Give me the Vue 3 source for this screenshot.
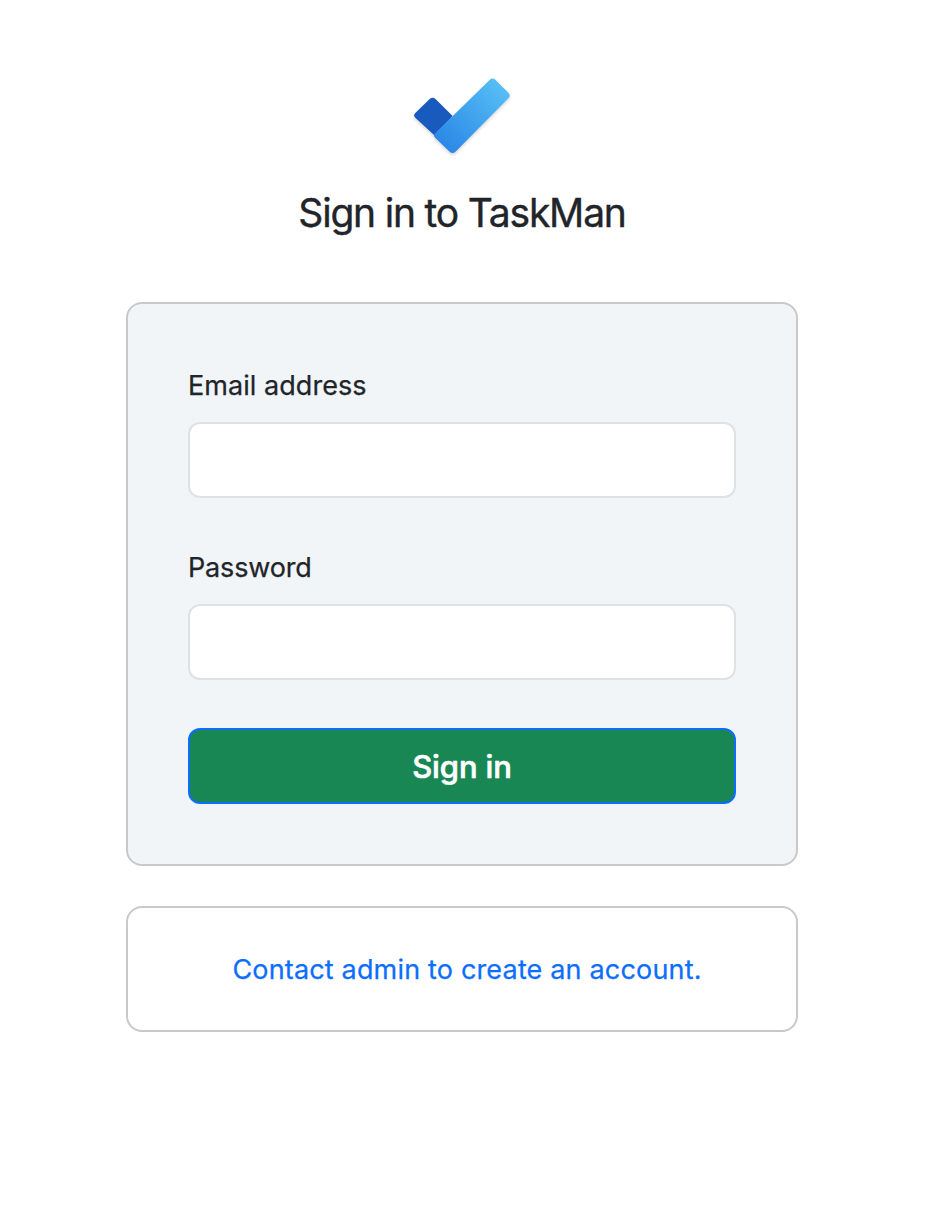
<script setup>
import { ref } from 'vue'

const email = ref('')
const password = ref('')
</script>

<template>
  <main class="page">
    <svg class="logo" viewBox="-0.6 -0.5 112 92" aria-hidden="true">
      <defs>
        <linearGradient id="check" gradientUnits="userSpaceOnUse" x1="36" y1="76" x2="95" y2="18">
          <stop offset="0" stop-color="#2b87e6" />
          <stop offset="1" stop-color="#55bdf4" />
        </linearGradient>
      </defs>
      <path fill="#185abd" d="M23.1 28.6Q26 26 28.9 28.6L46 45.5L28 65L8.7 47.2Q6.2 44.7 8.7 42.4Z" />
      <path fill="url(#check)" d="M83 9.4Q86 6.8 89 9.4L101.8 22.2Q104.6 25 101.8 27.8L48.9 81.2Q46 84 43.1 81.2L28.5 67.2Q26.2 65 28.5 62.7Z" />
    </svg>
    <h1 class="title">Sign in to TaskMan</h1>

    <form class="card" @submit.prevent>
      <label class="label" for="email">Email address</label>
      <input id="email" v-model="email" class="field" type="email" />
      <label class="label second" for="password">Password</label>
      <input id="password" v-model="password" class="field" type="password" />
      <button class="submit" type="submit">Sign in</button>
    </form>

    <div class="contact">
      <a class="link" href="#">Contact admin to create an account.</a>
    </div>
  </main>
</template>

<style>
body {
  background: #fff;
}
</style>

<style scoped>
.page {
  box-sizing: border-box;
  width: 672px;
  margin-left: 126px;
  padding-top: 70px;
  display: flex;
  flex-direction: column;
  align-items: center;
  color: #212529;
  font-family: Inter, "Liberation Sans", sans-serif;
}
.logo {
  width: 112px;
  height: 92px;
  filter: drop-shadow(0 2px 1.5px rgba(0, 0, 0, 0.16));
}
.title {
  margin: 27px 0 65px;
  font-size: 39px;
  line-height: 48px;
  font-weight: 400;
  letter-spacing: -1.2px;
  -webkit-text-stroke: 0.4px currentColor;
  white-space: nowrap;
}
.card {
  box-sizing: border-box;
  width: 672px;
  height: 564px;
  padding: 60px;
  display: flex;
  flex-direction: column;
  background: #f1f5f8;
  border: 2px solid #c9c9c9;
  border-radius: 16px;
}
.label {
  height: 42px;
  margin-bottom: 16px;
  font-size: 27px;
  line-height: 44px;
  letter-spacing: 0.05px;
  -webkit-text-stroke: 0.25px currentColor;
}
.second {
  margin-top: 48px;
  letter-spacing: -0.15px;
}
.field {
  box-sizing: border-box;
  width: 100%;
  height: 76px;
  padding: 12px 24px;
  font: inherit;
  font-size: 27px;
  background: #fff;
  border: 2px solid #dee2e6;
  border-radius: 12px;
  outline: none;
}
.submit {
  box-sizing: border-box;
  width: 100%;
  height: 76px;
  margin-top: 48px;
  padding: 0;
  font-family: inherit;
  font-size: 31px;
  font-weight: 500;
  letter-spacing: -0.1px;
  -webkit-text-stroke: 0.6px currentColor;
  color: #fff;
  background: #198754;
  border: 2px solid #0d6efd;
  border-radius: 12px;
}
.contact {
  box-sizing: border-box;
  width: 672px;
  height: 126px;
  margin-top: 40px;
  padding: 2px 0 0 10px;
  display: flex;
  align-items: center;
  justify-content: center;
  border: 2px solid #c9c9c9;
  border-radius: 16px;
}
.link {
  color: #0d6efd;
  font-size: 27px;
  line-height: 42px;
  letter-spacing: 0.17px;
  -webkit-text-stroke: 0.25px currentColor;
  text-decoration: none;
  white-space: nowrap;
}
</style>
